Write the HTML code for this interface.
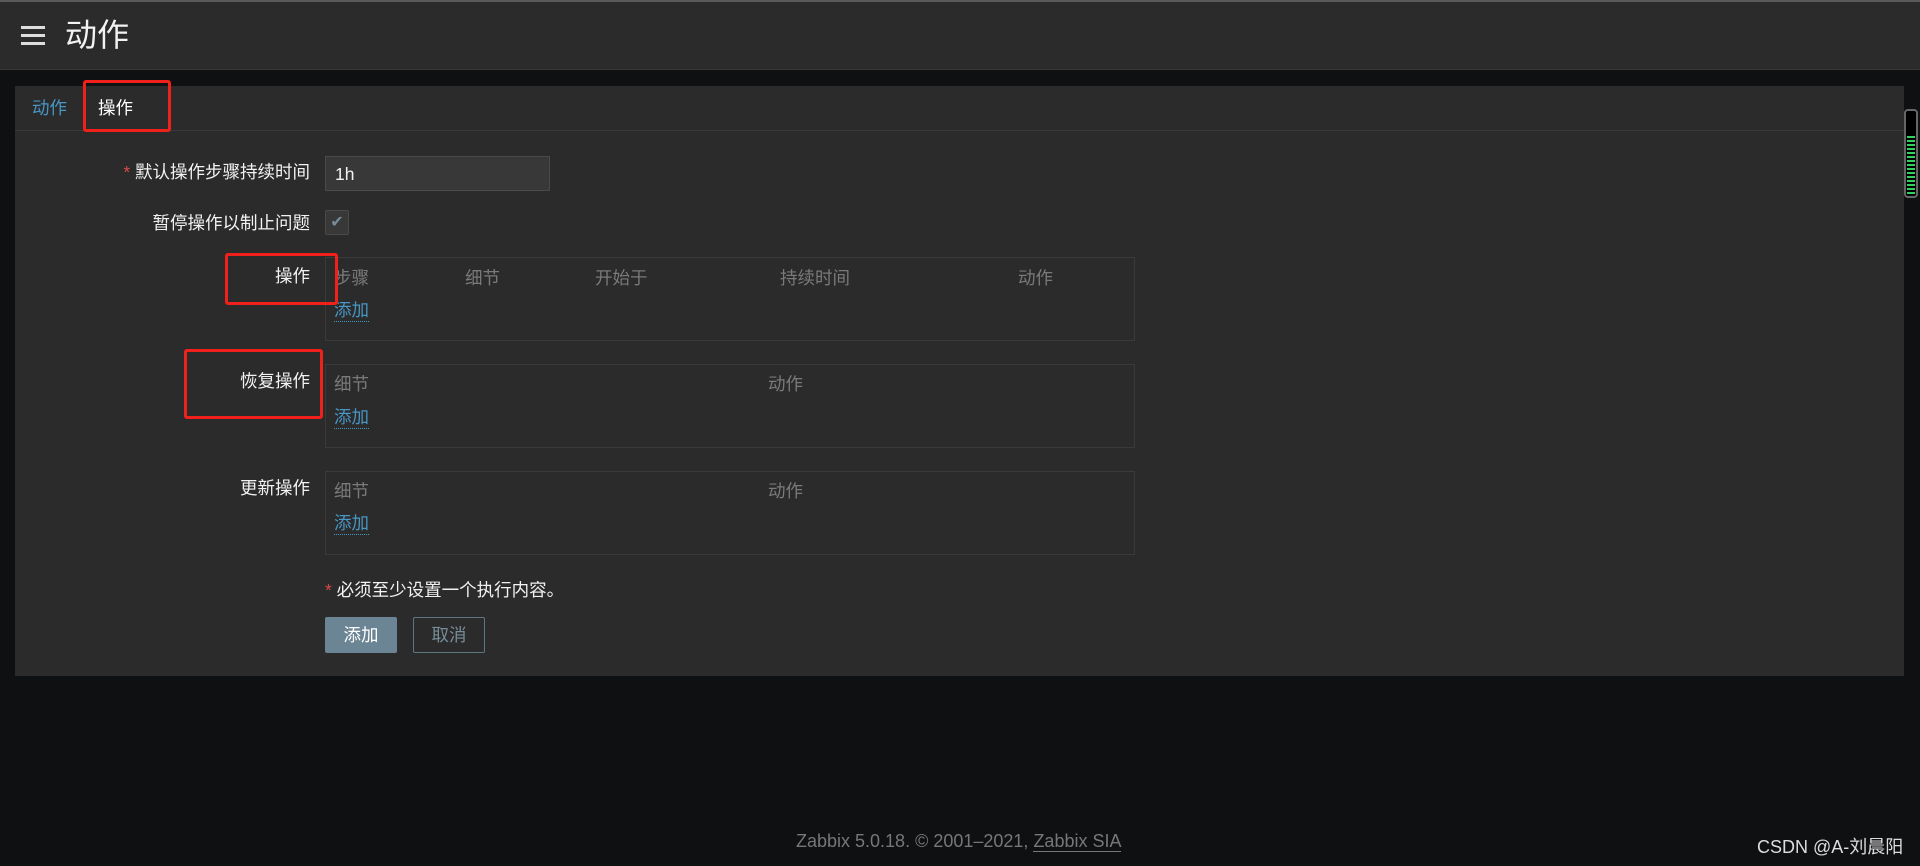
<!DOCTYPE html>
<html><head><meta charset="utf-8"><style>
*{margin:0;padding:0;box-sizing:border-box}
body{width:1920px;height:866px;background:#0f1012;font-family:"Liberation Sans","Noto Sans CJK SC",sans-serif;color:#f2f2f2;position:relative;overflow:hidden;font-size:17.5px;line-height:22px}
.a{position:absolute}
.hdr{left:0;top:0;width:1920px;height:70px;background:#2b2b2b;border-top:2px solid #5a5a5a;border-bottom:1px solid #383838}
.panel{left:15px;top:86px;width:1889px;height:590px;background:#2b2b2b}
.tabs{left:15px;top:86px;width:1889px;height:45px;border-bottom:1px solid #3a3a3a}
.lbl{text-align:right;width:300px;left:10px}
.box{border:1px solid #3a3a3a}
.th{color:#7a7a7a}
.lnk{color:#4796c4;border-bottom:1px dotted #4796c4;line-height:21px}
.red{border:3px solid #f0201a;border-radius:3px}
</style></head><body>
<div class="a hdr"></div>
<div class="a" style="left:21px;top:26px;width:24px;height:3px;background:#ddd"></div>
<div class="a" style="left:21px;top:34px;width:24px;height:3px;background:#ddd"></div>
<div class="a" style="left:21px;top:42px;width:24px;height:3px;background:#ddd"></div>
<div class="a" style="left:65px;top:15px;font-size:32px;line-height:40px;color:#f2f2f2">动作</div>
<div class="a panel"></div>
<div class="a tabs"></div>
<div class="a" style="left:32px;top:97px;color:#4796c4">动作</div>
<div class="a" style="left:98px;top:97px;color:#fff">操作</div>
<div class="a red" style="left:83px;top:80px;width:88px;height:52px"></div>

<div class="a lbl" style="top:161px"><span style="color:#d64a4a">*</span> 默认操作步骤持续时间</div>
<div class="a" style="left:325px;top:156px;width:225px;height:35px;background:#383838;border:1px solid #4a4a4a;padding:6px 9px">1h</div>
<div class="a lbl" style="top:212px">暂停操作以制止问题</div>
<div class="a" style="left:325px;top:210px;width:24px;height:25px;background:#383838;border:1px solid #4a4a4a;border-radius:2px;color:#768d99;font-size:16px;text-align:center;line-height:23px">✔</div>

<div class="a lbl" style="top:265px">操作</div>
<div class="a box" style="left:325px;top:257px;width:810px;height:84px"></div>
<div class="a th" style="left:334px;top:267px">步骤</div>
<div class="a th" style="left:465px;top:267px">细节</div>
<div class="a th" style="left:595px;top:267px">开始于</div>
<div class="a th" style="left:780px;top:267px">持续时间</div>
<div class="a th" style="left:1018px;top:267px">动作</div>
<div class="a lnk" style="left:334px;top:300px">添加</div>
<div class="a red" style="left:225px;top:253px;width:113px;height:52px"></div>

<div class="a lbl" style="top:370px">恢复操作</div>
<div class="a box" style="left:325px;top:364px;width:810px;height:84px"></div>
<div class="a th" style="left:334px;top:373px">细节</div>
<div class="a th" style="left:768px;top:373px">动作</div>
<div class="a lnk" style="left:334px;top:407px">添加</div>
<div class="a red" style="left:184px;top:349px;width:139px;height:70px"></div>

<div class="a lbl" style="top:477px">更新操作</div>
<div class="a box" style="left:325px;top:471px;width:810px;height:84px"></div>
<div class="a th" style="left:334px;top:480px">细节</div>
<div class="a th" style="left:768px;top:480px">动作</div>
<div class="a lnk" style="left:334px;top:513px">添加</div>

<div class="a" style="left:325px;top:579px"><span style="color:#d64a4a">*</span> 必须至少设置一个执行内容。</div>
<div class="a" style="left:325px;top:617px;width:72px;height:36px;background:#6b8594;border-radius:2px;text-align:center;line-height:36px;color:#fff">添加</div>
<div class="a" style="left:413px;top:617px;width:72px;height:36px;border:1px solid #5e7582;border-radius:2px;text-align:center;line-height:34px;color:#768d99">取消</div>

<div class="a" style="left:1904px;top:109px;width:14px;height:89px;border:2px solid #666;border-radius:4px;background:#000"></div>
<div class="a" style="left:1907px;top:136px;width:8px;height:59px;background:repeating-linear-gradient(#2ed35f 0 2px,#000 2px 4px)"></div>

<div class="a" style="left:796px;top:830px;color:#777;font-size:18px">Zabbix 5.0.18. © 2001–2021, <span style="border-bottom:1px solid #777">Zabbix SIA</span></div>
<div class="a" style="left:1757px;top:836px;color:#ddd;font-size:18px">CSDN @A-刘晨阳</div>
</body></html>
